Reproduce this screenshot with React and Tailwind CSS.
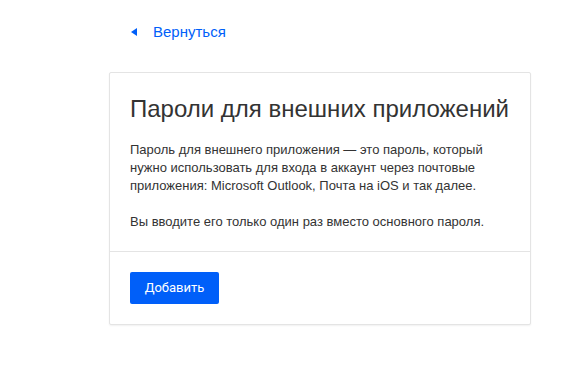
export default function App() {
  return (
    <div className="w-[579px] h-[374px] bg-white" style={{ fontFamily: '"Liberation Sans", Arial, sans-serif' }}>
      <div className="pl-[109px] pt-[22px]">
        <a className="flex items-center h-[20px] pl-[22px] text-[15px] text-[#005ff9] cursor-pointer">
          <svg width="6" height="8" viewBox="0 0 6 8" className="mr-[16px]">
            <path d="M0 4 L6 0 L6 8 Z" fill="#005ff9" />
          </svg>
          Вернуться
        </a>
        <div className="mt-[30px] w-[422px] border border-[#e4e4e4] rounded-[2px] bg-white shadow-[0_1px_2px_rgba(0,0,0,0.06)]">
          <div className="px-[20px] pt-[20px] pb-[20px] border-b border-[#e4e4e4] text-[#333]">
            <h1 className="text-[24px] leading-[32px] font-normal whitespace-nowrap">Пароли для внешних приложений</h1>
            <p className="mt-[16px] text-[13px] leading-[18px]">
              Пароль для внешнего приложения — это пароль, который нужно использовать для входа в аккаунт через почтовые приложения: Microsoft Outlook, Почта на iOS и так далее.
            </p>
            <p className="mt-[18px] text-[13px] leading-[18px]">
              Вы вводите его только один раз вместо основного пароля.
            </p>
          </div>
          <div className="p-[20px]">
            <button className="h-[32px] w-[89px] rounded-[2px] bg-[#005ff9] text-white text-[13px]" style={{ fontFamily: 'Roboto, sans-serif' }}>
              Добавить
            </button>
          </div>
        </div>
      </div>
    </div>
  );
}
